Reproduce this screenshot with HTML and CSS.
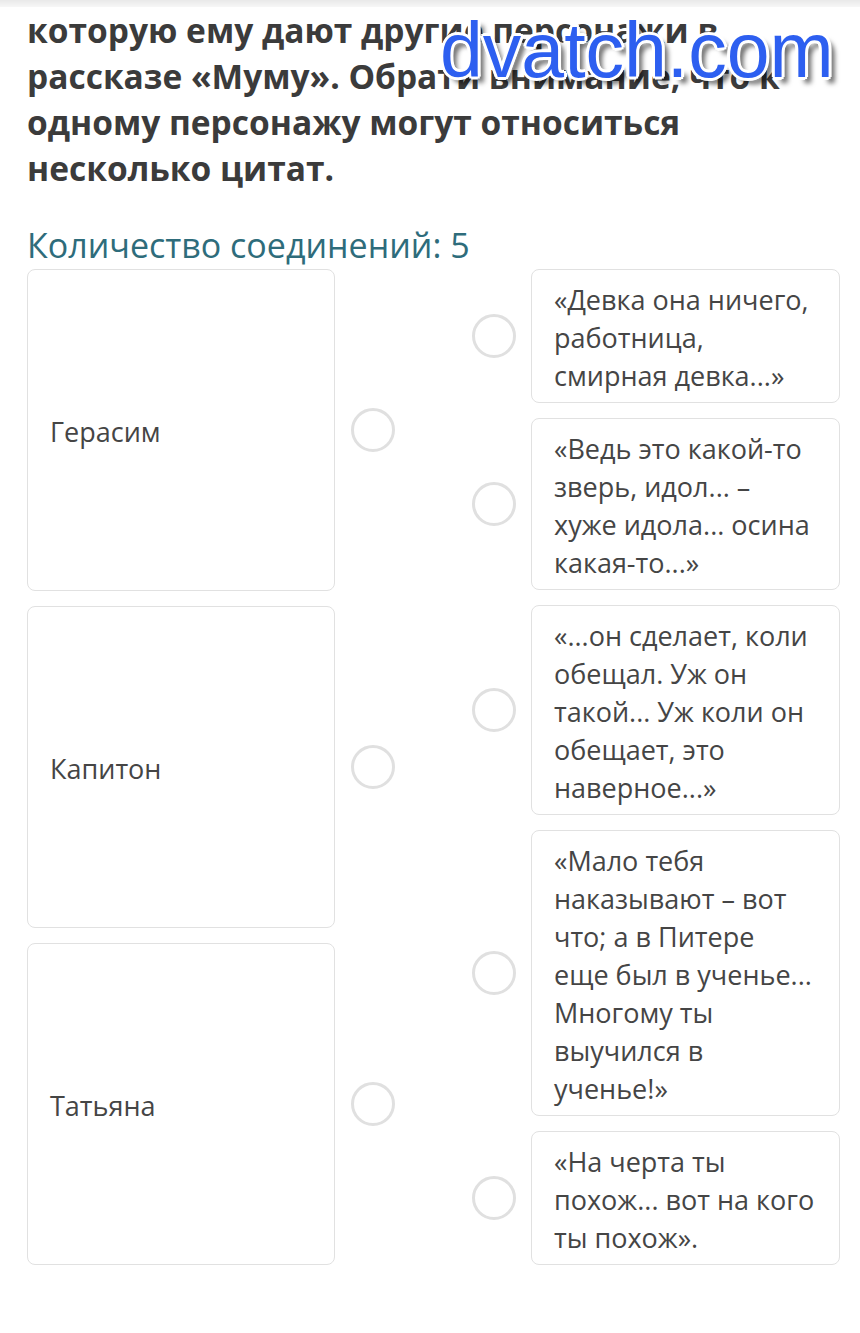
FILE: index.html
```html
<!DOCTYPE html>
<html lang="ru">
<head>
  <meta charset="UTF-8">
  <title>Соотнеси цитаты</title>
  <meta name="viewport" content="width=device-width, initial-scale=1.0">
  <link rel="stylesheet" href="styles.css">
</head>
<body>
  <div class="topbar"></div>
  <div class="watermark">dvatch.com</div>

  <div class="question">
    <h2>которую ему дают другие персонажи в рассказе «Муму». Обрати внимание, что к одному персонажу могут относиться несколько цитат.</h2>

    <p class="count">Количество соединений: 5</p>

    <div class="match">
      <div class="left-col">
        <div class="item">
          <div class="card">Герасим</div>
          <span class="dot"></span>
        </div>
        <div class="item">
          <div class="card">Капитон</div>
          <span class="dot"></span>
        </div>
        <div class="item">
          <div class="card">Татьяна</div>
          <span class="dot"></span>
        </div>
      </div>

      <div class="right-col">
        <div class="item">
          <span class="dot"></span>
          <div class="card">«Девка она ничего, работница, смирная девка...»</div>
        </div>
        <div class="item">
          <span class="dot"></span>
          <div class="card">«Ведь это какой-то зверь, идол... – хуже&nbsp;идола... осина какая-то...»</div>
        </div>
        <div class="item">
          <span class="dot"></span>
          <div class="card">«...он сделает, коли обещал. Уж он такой... Уж коли он обещает, это наверное...»</div>
        </div>
        <div class="item">
          <span class="dot"></span>
          <div class="card">«Мало тебя наказывают – вот что; а в Питере еще&nbsp;был в ученье... Многому ты выучился в ученье!»</div>
        </div>
        <div class="item">
          <span class="dot"></span>
          <div class="card">«На черта ты похож... вот на кого ты похож».</div>
        </div>
      </div>
    </div>
  </div>
</body>
</html>
```

FILE: styles.css
```css
* {
  margin: 0px;
  padding: 0px;
  box-sizing: border-box;
}

body {
  font-family: 'Open Sans', 'DejaVu Sans', sans-serif;
  color: #444;
  background: #fff;
}

.topbar {
  height: 7px;
  background: linear-gradient(#e9e9e9, #f7f7f7);
}

.watermark {
  position: absolute;
  top: 12px;
  left: 440px;
  font-family: 'Liberation Sans', Arial, sans-serif;
  font-size: 77px;
  line-height: 77px;
  color: #2d5ff0;
  text-shadow:
    -3px 0 #fff, 3px 0 #fff, 0 -3px #fff, 0 3px #fff,
    -2px -2px #fff, 2px 2px #fff, -2px 2px #fff, 2px -2px #fff,
    6px 6px 5px rgba(0,0,0,0.6);
}

.question {
  padding: 0 20px 60px 27px;
}

h2 {
  font-size: 33.5px;
  font-weight: bold;
  line-height: 46px;
  color: #3b3b3b;
}

.count {
  margin-top: 34px;
  font-size: 34px;
  line-height: 40px;
  color: #2e6c7b;
  margin-bottom: 4px;
}

.match {
  display: flex;
}

.left-col {
  width: 445px;
  display: flex;
  flex-direction: column;
  gap: 15px;
}

.left-col .item {
  flex: 1;
  display: flex;
  align-items: center;
}

.left-col .card {
  width: 308px;
  align-self: stretch;
  display: flex;
  align-items: center;
}

.left-col .dot {
  margin-left: 16px;
}

.right-col {
  flex: 1;
  display: flex;
  flex-direction: column;
  gap: 15px;
}

.right-col .item {
  display: flex;
  align-items: center;
  gap: 15px;
}

.right-col .card {
  flex: 1;
}

.card {
  border: 1px solid #e1e1e1;
  border-radius: 8px;
  padding: 11px 18px 7px 22px;
  font-size: 27px;
  line-height: 38px;
  color: #454545;
  background: #fff;
}

.dot {
  flex: none;
  width: 44px;
  height: 44px;
  border: 3px solid #e0e0e0;
  border-radius: 50%;
}
```
